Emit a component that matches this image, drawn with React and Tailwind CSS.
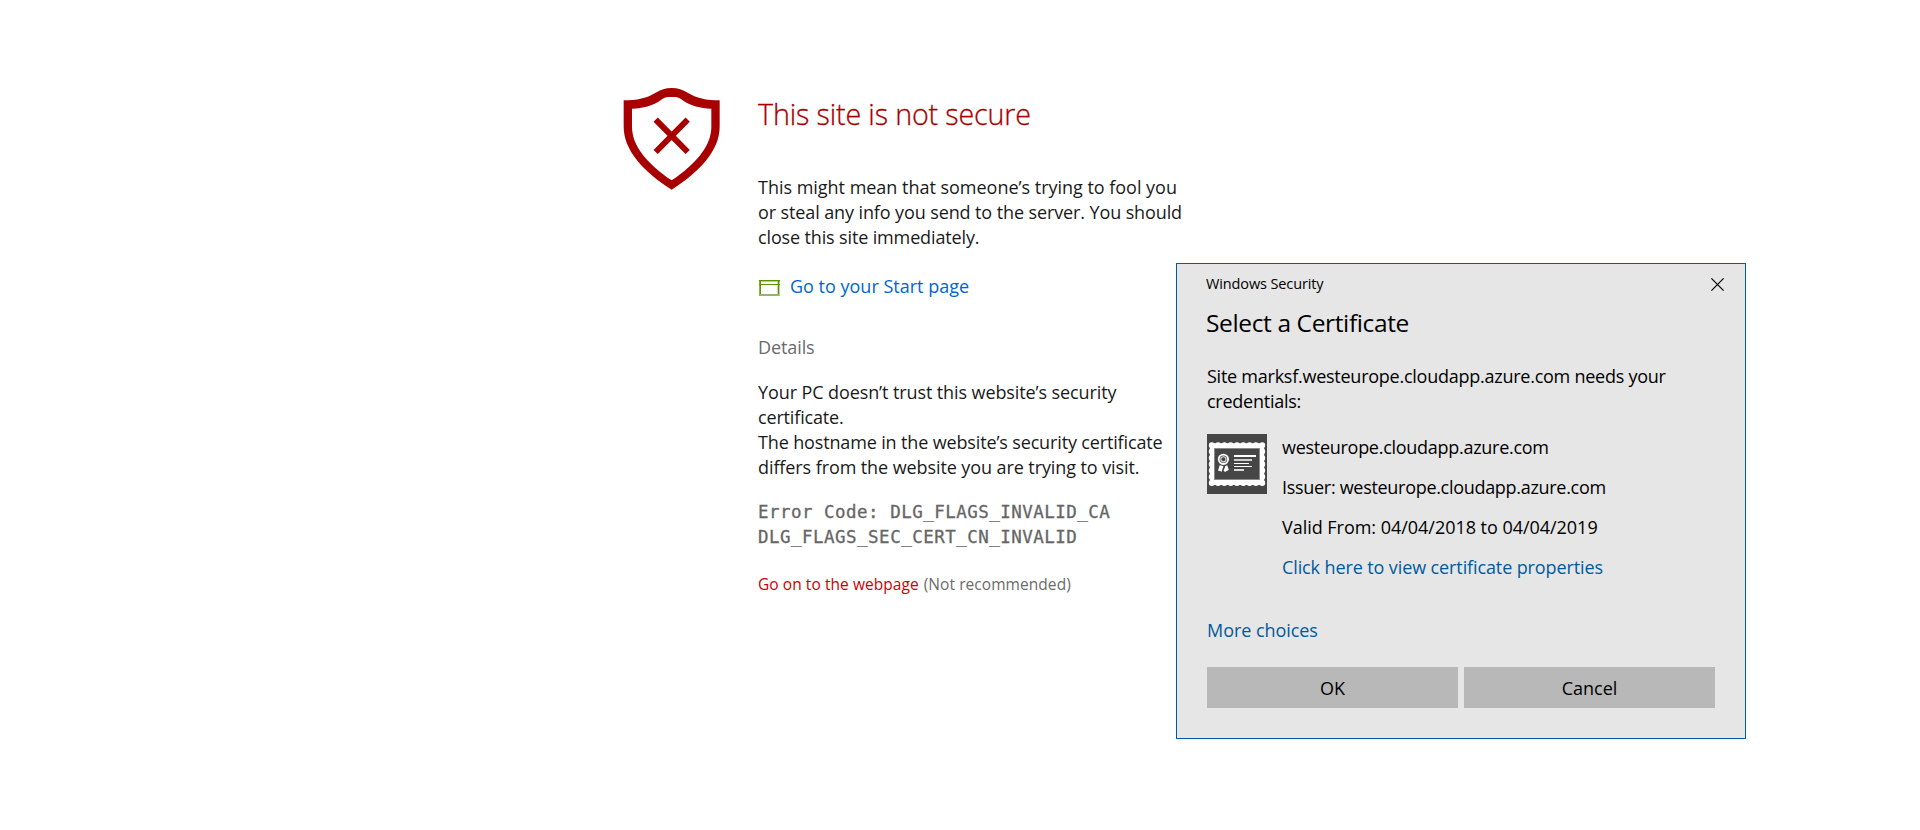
function ShieldIcon() {
  return (
    <svg className="h-[130px] w-[130px] shrink-0" viewBox="0 0 390 390" aria-hidden="true">
      <path
        fill="#a80000"
        fillRule="evenodd"
        d="M41 76C80 76 112 69 137 53C152 44 166 39 185 39C204 39 218 44 233 53C258 69 290 76 329 76V155C329 225 270 290 185 344C100 290 41 225 41 155ZM66 101C100 100 128 91 150 77C160 70 166 66 175 66H195C204 66 210 70 220 77C242 91 270 100 304 101V155C304 214 256 268 185 316C114 268 66 214 66 155Z"
      />
      <path d="M137 134L233 231M233 134L137 231" stroke="#a80000" strokeWidth="18" fill="none" />
    </svg>
  );
}

function PageIcon() {
  return (
    <svg className="mt-1.5 h-4 w-[21px]" viewBox="0 0 21 16" aria-hidden="true">
      <rect x="0" y="0" width="21" height="1" fill="#5a9400" />
      <rect x="0" y="1" width="21" height="1" fill="#b7cf94" />
      <rect x="0" y="4" width="21" height="1" fill="#5a9400" />
      <rect x="0.3" y="0" width="1.7" height="16" fill="#5a9400" />
      <rect x="18.7" y="0" width="1.7" height="16" fill="#5a9400" />
      <rect x="0.3" y="14" width="20.1" height="2" fill="#95b566" />
    </svg>
  );
}

function CertificateIcon() {
  return (
    <svg className="h-[60px] w-[60px] shrink-0" viewBox="0 0 60 60" aria-hidden="true">
      <rect width="60" height="60" fill="#464646" />
      <rect x="4.8" y="11.3" width="50.4" height="37.8" fill="#fff" stroke="#fff" strokeWidth="4" strokeLinejoin="round" />
      <rect x="4.8" y="11.3" width="50.4" height="37.8" fill="none" stroke="#fff" strokeWidth="6" strokeLinecap="round" strokeDasharray="0 6.3" />
      <rect x="7.5" y="14.5" width="45" height="31" fill="#464646" stroke="#8a8a8a" strokeWidth="1" />
      <circle cx="16.4" cy="25.3" r="4.7" fill="none" stroke="#fff" strokeWidth="1.8" />
      <circle cx="16.4" cy="25.3" r="2.6" fill="none" stroke="#e0e0e0" strokeWidth="1.1" />
      <path d="M12.6 31.3L16.4 32L14.5 38L13.2 37L11 36.8Z" fill="#fff" />
      <path d="M20.2 31.3L18.4 32L16.6 36.8L18.3 38L19.5 37L21.8 36Z" fill="#fff" />
      <rect x="27" y="21" width="22" height="2" fill="#fff" />
      <rect x="27" y="25" width="18" height="2" fill="#cfcfcf" />
      <rect x="27" y="29" width="15" height="1" fill="#fff" />
      <rect x="27" y="32" width="18" height="1" fill="#fff" />
      <rect x="27" y="35" width="10" height="2" fill="#d8d8d8" />
    </svg>
  );
}

function CertificateDialog() {
  return (
    <div
      role="dialog"
      className="absolute top-[263px] left-[1176px] flex h-[476px] w-[570px] flex-col border border-[#005a9e] bg-[#e6e6e6] pt-2.5 pl-[29px] text-lg leading-[25px] whitespace-nowrap text-black"
    >
      <div className="flex h-5 w-[518px] items-start justify-between">
        <span className="text-[14.5px] leading-5 tracking-[-0.12px]">Windows Security</span>
        <svg className="mt-1 h-[13px] w-[13px]" viewBox="0 0 13 13" aria-label="Close">
          <path d="M0.4 0.4L12.6 12.6M12.6 0.4L0.4 12.6" stroke="#000" strokeWidth="1.2" />
        </svg>
      </div>
      <h2 className="mt-[13px] text-[24.5px] leading-8 tracking-[-0.37px]">Select a Certificate</h2>
      <div className="flex w-[509px] flex-col pl-px">
        <p className="mt-[25px] tracking-[-0.25px]">
          Site marksf.westeurope.cloudapp.azure.com needs your
          <br />
          credentials:
        </p>
        <div className="mt-5 flex gap-[15px]">
          <CertificateIcon />
          <div className="flex flex-col gap-[15px] pt-px">
            <span className="tracking-[-0.28px]">westeurope.cloudapp.azure.com</span>
            <span className="tracking-[-0.3px]">Issuer: westeurope.cloudapp.azure.com</span>
            <span className="tracking-[-0.03px]">Valid From: 04/04/2018 to 04/04/2019</span>
            <a className="tracking-[-0.11px] text-[#005a9e]">Click here to view certificate properties</a>
          </div>
        </div>
        <a className="mt-[38px] tracking-[-0.05px] text-[#005a9e]">More choices</a>
        <div className="mt-6 flex gap-1.5">
          <button className="h-[41px] w-[251px] bg-[#b8b8b8] pt-0.5">OK</button>
          <button className="h-[41px] w-[251px] bg-[#b8b8b8] pt-0.5">Cancel</button>
        </div>
      </div>
    </div>
  );
}

export default function App() {
  return (
    <div className="relative h-[830px] w-full overflow-hidden bg-white font-['Open_Sans','Noto_Sans',sans-serif]">
      <main className="flex pt-[75px] pl-[610px] text-lg leading-[25px] whitespace-nowrap text-[#1a1a1a]">
        <ShieldIcon />
        <div className="ml-[18px] pt-[19px]">
          <h1 className="text-[28.7px] leading-10 font-light tracking-[-0.16px] text-[#a80000] [-webkit-text-stroke:0.3px_#a80000]">This site is not secure</h1>
          <p className="mt-[41px]">
            <span className="block tracking-[-0.02px]">This might mean that someone’s trying to fool you</span>
            <span className="block tracking-[-0.11px]">or steal any info you send to the server. You should</span>
            <span className="block tracking-[-0.14px]">close this site immediately.</span>
          </p>
          <div className="mt-6 flex gap-2.5 pl-px">
            <PageIcon />
            <a className="text-[#0066cc]">Go to your Start page</a>
          </div>
          <h2 className="mt-9 tracking-[-0.1px] text-[#6b6b6b]">Details</h2>
          <p className="mt-5">
            <span className="block tracking-[-0.1px]">Your PC doesn’t trust this website’s security</span>
            <span className="block tracking-[-0.16px]">certificate.</span>
            <span className="block tracking-[-0.145px]">The hostname in the website’s security certificate</span>
            <span className="block tracking-[-0.09px]">differs from the website you are trying to visit.</span>
          </p>
          <p className="mt-5 font-['DejaVu_Sans_Mono',monospace] text-[17.5px] tracking-[0.475px] text-[#666] [-webkit-text-stroke:0.3px_#666]">
            Error Code: DLG_FLAGS_INVALID_CA
            <br />
            DLG_FLAGS_SEC_CERT_CN_INVALID
          </p>
          <p className="mt-6 flex gap-[5px] text-[15.5px] leading-5 tracking-[0.06px]">
            <a className="text-[#cc0000]">Go on to the webpage</a>
            <span className="text-[#6b6b6b]">(Not recommended)</span>
          </p>
        </div>
      </main>
      <CertificateDialog />
    </div>
  );
}
